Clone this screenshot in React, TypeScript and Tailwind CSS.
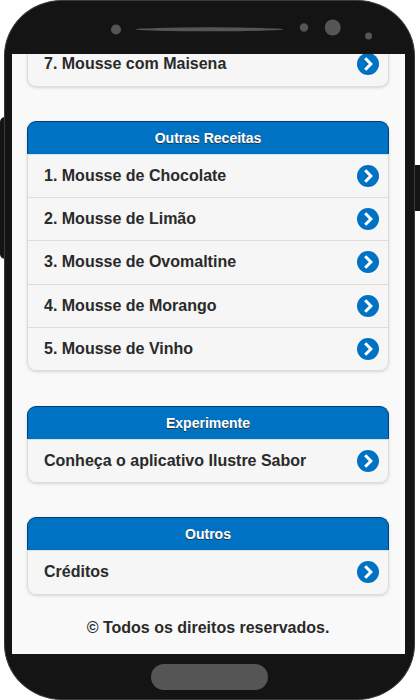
import React from "react";

const OTHER_RECIPES = [
  "1. Mousse de Chocolate",
  "2. Mousse de Limão",
  "3. Mousse de Ovomaltine",
  "4. Mousse de Morango",
  "5. Mousse de Vinho",
];

type SectionProps = {
  title: string;
  items: string[];
}

const App = () => {
  return (
    <div className="relative h-[700px] w-[420px] overflow-hidden bg-white font-['Liberation_Sans',Arial,sans-serif]">
      {/* side buttons */}
      <div className="absolute left-0 top-[117px] h-[142px] w-3 rounded-[5px] bg-[#141414]"/>
      <div className="absolute right-0 top-[165px] h-[46px] w-3 bg-[#141414]"/>

      <div className="relative ml-1 flex h-[700px] w-[411px] flex-col rounded-[58px/56px] border border-[#3a3a3a] bg-[#141414] pl-[7px]">
        <PhoneTop />
        <main className="flex h-[600px] w-[393px] flex-col overflow-hidden bg-[#f9f9f9] pl-[15px] pr-4">
          <ul className="h-[33px] shrink-0 rounded-b-[9px] border border-t-0 border-[#ddd] bg-[#f6f6f6] shadow-[0_1px_3px_rgba(0,0,0,0.15)]">
            <li className="-mt-[11px]">
              <Row label="7. Mousse com Maisena"/>
            </li>
          </ul>
          <Section title="Outras Receitas" items={OTHER_RECIPES}/>
          <Section title="Experimente" items={["Conheça o aplicativo Ilustre Sabor"]}/>
          <Section title="Outros" items={["Créditos"]}/>
          <p className="mt-[22px] text-center text-base font-bold leading-[21px] text-[#2a2a2a]">
            © Todos os direitos reservados.
          </p>
        </main>
        <div className="flex grow items-center justify-center pr-[7px]">
          <div className="h-[26px] w-[117px] rounded-full bg-[#555]"/>
        </div>
      </div>
    </div>
  )
}

const PhoneTop = () => {
  return (
    <svg className="-ml-2 h-[53px] w-[411px] shrink-0" viewBox="4 1 411 53" fill="#555">
      <circle cx="116" cy="29.5" r="5"/>
      <ellipse cx="209.5" cy="29.3" rx="74" ry="2"/>
      <circle cx="304" cy="27.5" r="4.2"/>
      <circle cx="332.7" cy="27.5" r="8"/>
      <circle cx="368.6" cy="36" r="3.5"/>
    </svg>
  )
}

const Section = ({ title, items }: SectionProps) => {
  return (
    <section className="mt-[34.6px] shrink-0 rounded-[9px] bg-[#f6f6f6] shadow-[0_1px_3px_rgba(0,0,0,0.15)] first-of-type:mt-[34px]">
      <h2 className="h-[33px] rounded-t-[9px] border border-b-0 border-[#00407a] bg-[#0072c3] text-center text-sm font-bold leading-[33px] text-white [text-shadow:0_1px_0_#333]">
        {title}
      </h2>
      <ul className="rounded-b-[9px] border border-t-0 border-[#ddd]">
        {items.map((item) => (
          <li key={item} className="border-t border-[#ddd]">
            <Row label={item}/>
          </li>
        ))}
      </ul>
    </section>
  )
}

const Row = ({ label }: { label: string }) => {
  return (
    <a href="#" className="flex h-[42.2px] items-center justify-between pl-4 pr-[9px] text-base font-bold text-[#2a2a2a] [text-shadow:0_1px_0_#f3f3f3]">
      <span className="whitespace-nowrap">{label}</span>
      <svg width="22" height="22" viewBox="0 0 22 22">
        <circle cx="11" cy="11" r="11" fill="#0072c3"/>
        <path d="M8.2 5.2 L13.9 11 L8.2 16.8" fill="none" stroke="#fff" strokeWidth="3"/>
      </svg>
    </a>
  )
}

export default App;
